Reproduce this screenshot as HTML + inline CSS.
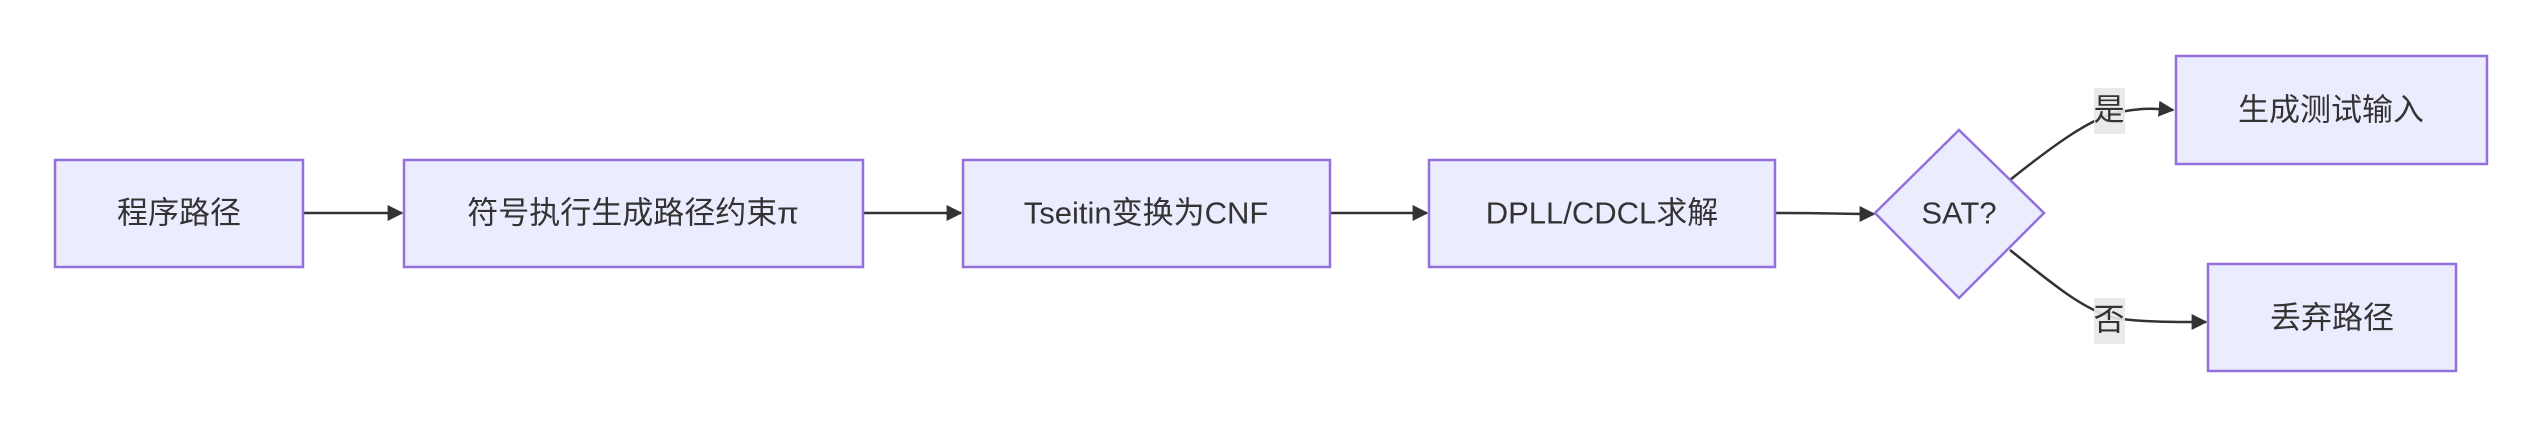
<!DOCTYPE html>
<html><head><meta charset="utf-8"><style>
html,body{margin:0;padding:0;background:#fff;}
svg{display:block}
text{font-family:"Liberation Sans","Noto Sans CJK SC",sans-serif;font-size:31px;fill:#333;text-anchor:middle;dominant-baseline:central}
.n{fill:#ECECFF;stroke:#9370DB;stroke-width:2.5}
.e{fill:none;stroke:#333;stroke-width:2.5}
</style></head><body>
<svg width="2543" height="428" viewBox="0 0 2543 428">
<defs>
<marker id="b" viewBox="0 0 10 10" refX="9" refY="5" markerWidth="16" markerHeight="16" orient="auto" markerUnits="userSpaceOnUse"><path d="M0,0L10,5L0,10z" fill="#333"/></marker></defs>
<path class="e" d="M303,213H402" marker-end="url(#b)"/>
<path class="e" d="M863,213H961" marker-end="url(#b)"/>
<path class="e" d="M1330,213H1427" marker-end="url(#b)"/>
<path class="e" d="M1775,213C1830,213 1845,214 1874,214" marker-end="url(#b)"/>
<path class="e" d="M2010,180C2060,140 2090,120 2115,113C2140,108 2150,108 2173,110" marker-end="url(#b)"/>
<path class="e" d="M2010,250C2060,290 2085,310 2115,318C2140,322 2170,322 2206,322" marker-end="url(#b)"/>
<rect class="n" x="55" y="160" width="248" height="107"/><text x="179" y="213">程序路径</text>
<rect class="n" x="404" y="160" width="459" height="107"/><text x="633" y="213">符号执行生成路径约束π</text>
<rect class="n" x="963" y="160" width="367" height="107"/><text x="1146" y="213">Tseitin变换为CNF</text>
<rect class="n" x="1429" y="160" width="346" height="107"/><text x="1602" y="213">DPLL/CDCL求解</text>
<path class="n" d="M1959,130L2044,213L1959,298L1875,213Z"/><text x="1959" y="213">SAT?</text>
<rect class="n" x="2176" y="56" width="311" height="108"/><text x="2331" y="110">生成测试输入</text>
<rect class="n" x="2208" y="264" width="248" height="107"/><text x="2332" y="318">丢弃路径</text>
<rect x="2094" y="88" width="31" height="46" fill="#e8e8e8" opacity="0.9"/><text x="2109" y="110">是</text>
<rect x="2094" y="298" width="31" height="46" fill="#e8e8e8" opacity="0.9"/><text x="2109" y="320">否</text>
</svg>
</body></html>
